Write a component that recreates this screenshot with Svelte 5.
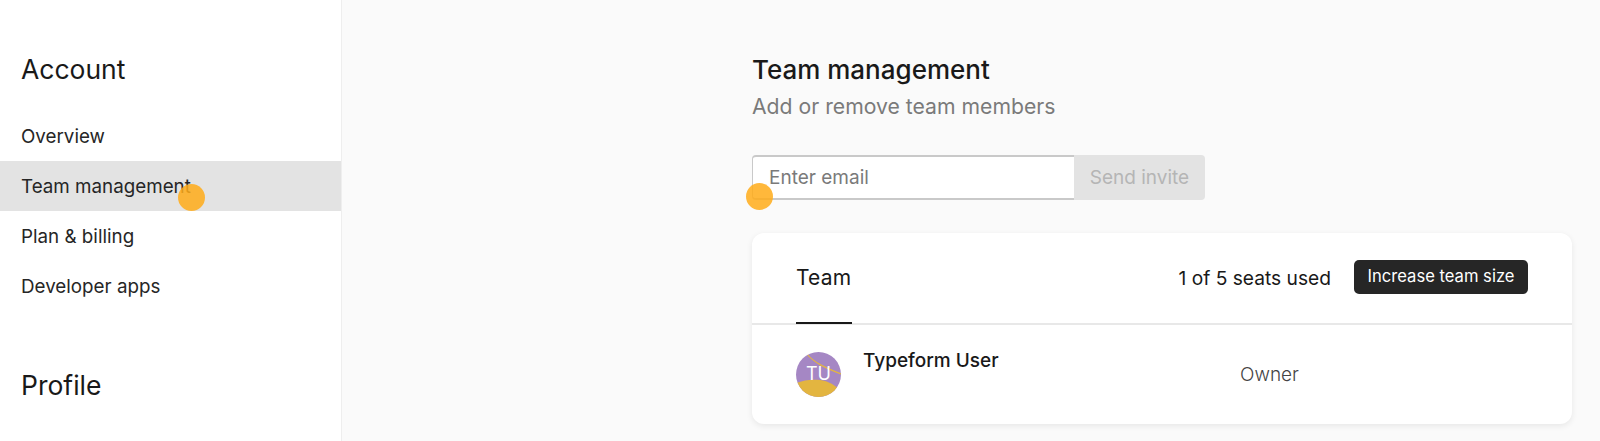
<script>
  const account = ["Overview", "Team management", "Plan & billing", "Developer apps"];
</script>

<div class="page">
  <aside class="sidebar">
    <h2 class="group">Account</h2>
    <nav>
      {#each account as item}
        <div class="nav-item" class:active={item === "Team management"}>{item}</div>
      {/each}
    </nav>
    <h2 class="group profile">Profile</h2>
  </aside>

  <main class="main">
    <div class="content">
      <h1>Team management</h1>
      <p class="sub">Add or remove team members</p>

      <div class="invite">
        <div class="email">Enter email</div>
        <div class="send">Send invite</div>
      </div>

      <section class="card">
        <header class="card-head">
          <div class="tab">Team</div>
          <div class="seats">1 of 5 seats used</div>
          <div class="increase">Increase team size</div>
        </header>
        <div class="row">
          <div class="avatar">
            <svg width="45" height="45" viewBox="0 0 45 45">
              <rect width="45" height="45" fill="#a587c4" />
              <path d="M0 31 C8 28 16 27 24 28 C32 29 40 33 45 40 V45 H0Z" fill="#e3b540" />
              <path d="M11 2 C18 11 30 16 45 22" fill="none" stroke="#e3b540" stroke-width="1.2" />
            </svg>
            <span>TU</span>
          </div>
          <div class="name">Typeform User</div>
          <div class="role">Owner</div>
        </div>
      </section>
    </div>
  </main>

  <span class="dot dot-nav"></span>
  <span class="dot dot-input"></span>
</div>

<style>
  :global(body) {
    margin: 0;
  }

  .page {
    position: relative;
    display: flex;
    height: 441px;
    overflow: hidden;
    background: #fafafa;
    color: #191919;
    font-family: Inter, "Liberation Sans", sans-serif;
  }

  .sidebar {
    flex: none;
    box-sizing: border-box;
    width: 342px;
    padding-top: 50px;
    background: #fff;
    border-right: 1px solid #eeeeee;
  }

  .group {
    margin: 0;
    padding-left: 21px;
    font-size: 26.5px;
    font-weight: 400;
    line-height: 38px;
  }

  nav {
    margin-top: 23px;
  }

  .nav-item {
    box-sizing: border-box;
    height: 50px;
    padding: 1px 0 0 21px;
    font-size: 18.8px;
    line-height: 50px;
    color: #262626;
  }

  .active {
    background: #e3e3e3;
  }

  .profile {
    margin-top: 55px;
  }

  .main {
    flex: 1;
    padding-left: 410px;
  }

  .content {
    width: 820px;
  }

  h1 {
    margin: 53px 0 0;
    font-size: 26px;
    font-weight: 500;
    line-height: 34px;
  }

  .sub {
    margin: 3px 0 0;
    color: #7a7a7a;
    font-size: 21.2px;
    line-height: 32px;
  }

  .invite {
    display: flex;
    margin-top: 33px;
    height: 45px;
    width: 453px;
    font-size: 19px;
  }

  .email {
    box-sizing: border-box;
    width: 322px;
    padding-left: 16px;
    background: #fff;
    border: 1px solid #c9c9c9;
    border-top-width: 2px;
    border-bottom-width: 2px;
    border-right: 0;
    border-radius: 4px 0 0 4px;
    color: #7a7a7a;
    line-height: 42px;
  }

  .send {
    flex: 1;
    text-align: center;
    background: #e3e3e3;
    border-radius: 0 4px 4px 0;
    color: #b5b5b5;
    line-height: 46px;
  }

  .card {
    margin-top: 33px;
    background: #fff;
    border-radius: 12px;
    box-shadow: 0 2px 6px rgba(0, 0, 0, 0.08);
  }

  .card-head {
    display: flex;
    align-items: center;
    height: 90px;
    padding: 0 44px;
    border-bottom: 2px solid #e8e8e8;
    font-size: 19.2px;
  }

  .tab {
    position: relative;
    align-self: stretch;
    width: 56px;
    margin-right: auto;
    font-size: 21px;
    letter-spacing: 0.2px;
    line-height: 90px;
  }

  .tab::after {
    content: "";
    position: absolute;
    left: 0;
    right: 0;
    bottom: -1px;
    height: 2px;
    background: #191919;
  }

  .increase {
    margin: 0 0 2px 23px;
    height: 34px;
    padding: 0 13.5px;
    background: #262626;
    border-radius: 5px;
    color: #fff;
    font-size: 16.6px;
    line-height: 33px;
  }

  .row {
    display: flex;
    height: 99px;
    padding: 0 44px;
  }

  .avatar {
    position: relative;
    flex: none;
    width: 45px;
    height: 45px;
    margin-top: 27px;
    border-radius: 50%;
    overflow: hidden;
  }

  .avatar svg {
    display: block;
  }

  .avatar span {
    position: absolute;
    inset: 0;
    color: #fff;
    font-size: 18px;
    line-height: 43px;
    text-align: center;
  }

  .name {
    width: 377px;
    margin: 24px 0 0 22px;
    font-size: 19px;
    font-weight: 500;
    line-height: 24px;
  }

  .role {
    margin-top: 38px;
    color: #444;
    font-size: 19px;
    font-weight: 300;
    line-height: 24px;
  }

  .dot {
    position: absolute;
    width: 27px;
    height: 27px;
    border-radius: 50%;
    background: rgba(255, 171, 25, 0.85);
  }

  .dot-nav {
    left: 178px;
    top: 184px;
  }

  .dot-input {
    left: 746px;
    top: 183px;
  }
</style>
